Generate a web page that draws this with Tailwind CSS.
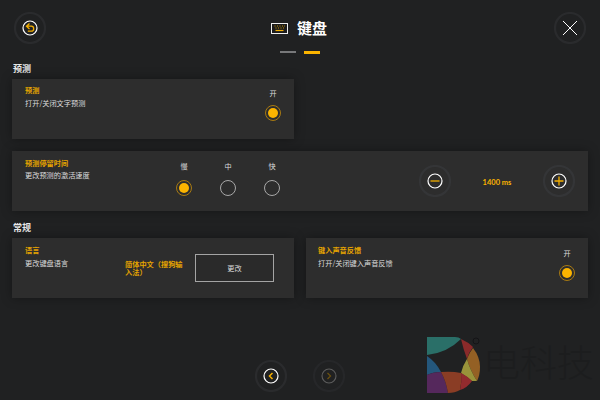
<!DOCTYPE html>
<html lang="zh-CN">
<head>
  <meta charset="UTF-8" />
  <title>键盘</title>
  <script src="https://cdn.jsdelivr.net/npm/@tailwindcss/browser@4"></script>
</head>
<body class="bg-[#202122]">
  <div class="relative w-[600px] h-[400px] overflow-hidden bg-[#202122] text-[#dcdcdc] text-[7.2px] leading-[10px] font-['Noto_Sans_CJK_SC',sans-serif] flex flex-col">

    <!-- Header -->
    <header class="h-[63px] shrink-0 px-[14px] pt-[12px] flex justify-between items-start">
      <svg class="w-[32px] h-[32px]" viewBox="0 0 32 32" fill="none">
        <circle cx="16" cy="16" r="15" stroke="#2a2b2d" stroke-width="2.2" />
        <circle cx="16" cy="16" r="7" stroke="#fff" stroke-width="1.2" />
        <path d="M15.5 11.5l-3 2.7 3 2.7M12.8 14.2h4.4a2.5 2.5 0 0 1 0 5h-3.4" stroke="#f5b000" stroke-width="1.3" />
      </svg>
      <div class="flex flex-col items-center">
        <div class="h-[32px] flex items-center gap-[9px] -ml-[2px]">
          <svg class="w-[17px] h-[11px]" viewBox="0 0 17 11" fill="none">
            <rect x="0.5" y="0.5" width="16" height="10" fill="#1b1b1b" stroke="#eee" />
            <path d="M3.5 3h1M6 3h1M8.5 3h1M11 3h1M13 3h.8M4.5 5h1M7 5h1M9.5 5h1M12 5h1" stroke="#c99400" />
            <path d="M4.5 7.5h8" stroke="#f5b000" stroke-width="1.2" />
          </svg>
          <span class="text-[15px] leading-[20px] font-bold text-white">键盘</span>
        </div>
        <div class="flex gap-[8px] mt-[7px]">
          <span class="w-[16px] h-[2px] bg-[#77787a]"></span>
          <span class="w-[16px] h-[3px] bg-[#fbb400]"></span>
        </div>
      </div>
      <svg class="w-[32px] h-[32px]" viewBox="0 0 32 32" fill="none">
        <circle cx="16" cy="16" r="15" stroke="#2a2b2d" stroke-width="2.2" />
        <path d="M9 9l14 14M23 9L9 23" stroke="#fff" stroke-width="1" />
      </svg>
    </header>

    <main class="px-[12px] flex flex-col">
      <h2 class="h-[12px] mb-[4px] pl-[1px] text-[9px] leading-[12px] font-bold text-[#e8e8e8]">预测</h2>

      <div class="flex">
        <section class="w-[282px] h-[60px] bg-[#2d2d2d] shadow-[0_0_10px_rgba(0,0,0,0.35)] pl-[13px] pr-[13px] pt-[6px] flex justify-between">
          <div>
            <h3 class="font-bold text-[#e6a400]">预测</h3>
            <p class="mt-[3px]">打开/关闭文字预测</p>
          </div>
          <div class="flex flex-col items-center pt-[3px]">
            <span>开</span>
            <span class="mt-[7px] w-[16px] h-[16px] rounded-full border border-[#a87a12] flex items-center justify-center"><span class="w-[10px] h-[10px] rounded-full bg-[#fbb400]"></span></span>
          </div>
        </section>
      </div>

      <section class="mt-[12px] h-[60px] bg-[#2d2d2d] shadow-[0_0_10px_rgba(0,0,0,0.35)] pl-[13px] pr-[13px] flex">
        <div class="w-[137px] pt-[7px]">
          <h3 class="font-bold text-[#e6a400]">预测停留时间</h3>
          <p class="mt-[2px]">更改预测的激活速度</p>
        </div>
        <div class="flex pt-[10px]">
          <div class="w-[44px] flex flex-col items-center">
            <span>慢</span>
            <span class="mt-[9px] w-[16px] h-[16px] rounded-full border border-[#a87a12] flex items-center justify-center"><span class="w-[10px] h-[10px] rounded-full bg-[#fbb400]"></span></span>
          </div>
          <div class="w-[44px] flex flex-col items-center">
            <span>中</span>
            <span class="mt-[9px] w-[16px] h-[16px] rounded-full border border-[#a8a8a8]"></span>
          </div>
          <div class="w-[44px] flex flex-col items-center">
            <span>快</span>
            <span class="mt-[9px] w-[16px] h-[16px] rounded-full border border-[#a8a8a8]"></span>
          </div>
        </div>
        <div class="ml-auto flex items-start pt-[14px]">
          <svg class="w-[32px] h-[32px]" viewBox="0 0 32 32" fill="none">
            <circle cx="16" cy="16" r="15" stroke="#343537" stroke-width="2.2" />
            <circle cx="16" cy="16" r="7" stroke="#fff" stroke-width="1.2" />
            <path d="M11.5 16h9" stroke="#f5b000" stroke-width="1.3" />
          </svg>
          <span class="w-[92px] mt-[13px] text-center text-[7.5px] font-['Lato',sans-serif] font-bold text-[#fbb400]">1400 ms</span>
          <svg class="w-[32px] h-[32px]" viewBox="0 0 32 32" fill="none">
            <circle cx="16" cy="16" r="15" stroke="#343537" stroke-width="2.2" />
            <circle cx="16" cy="16" r="7" stroke="#fff" stroke-width="1.2" />
            <path d="M11.5 16h9M16 11.5v9" stroke="#f5b000" stroke-width="1.3" />
          </svg>
        </div>
      </section>

      <h2 class="mt-[11px] h-[12px] mb-[4px] pl-[1px] text-[9px] leading-[12px] font-bold text-[#e8e8e8]">常规</h2>

      <div class="flex gap-[12px]">
        <section class="w-[282px] h-[60px] bg-[#2d2d2d] shadow-[0_0_10px_rgba(0,0,0,0.35)] pl-[13px] pr-[20px] pt-[7px] flex">
          <div class="w-[100px]">
            <h3 class="font-bold text-[#e6a400]">语言</h3>
            <p class="mt-[3px]">更改键盘语言</p>
          </div>
          <p class="w-[60px] mt-[15px] leading-[8px] font-bold text-[#e6a400]">简体中文（搜狗输入法）</p>
          <button class="ml-[10px] mt-[9px] w-[79px] h-[28px] border border-[#a4a4a4] bg-[#2a2a2a] text-[#dcdcdc] text-[7.2px]">更改</button>
        </section>
        <section class="w-[282px] h-[60px] bg-[#2d2d2d] shadow-[0_0_10px_rgba(0,0,0,0.35)] pl-[12px] pr-[13px] pt-[7px] flex justify-between">
          <div>
            <h3 class="font-bold text-[#e6a400]">键入声音反馈</h3>
            <p class="mt-[3px]">打开/关闭键入声音反馈</p>
          </div>
          <div class="flex flex-col items-center pt-[3px]">
            <span>开</span>
            <span class="mt-[7px] w-[16px] h-[16px] rounded-full border border-[#a87a12] flex items-center justify-center"><span class="w-[10px] h-[10px] rounded-full bg-[#fbb400]"></span></span>
          </div>
        </section>
      </div>
    </main>

    <!-- Bottom nav -->
    <footer class="mt-auto pb-[8px] flex justify-center gap-[26px]">
      <svg class="w-[32px] h-[32px]" viewBox="0 0 32 32" fill="none">
        <circle cx="16" cy="16" r="15" stroke="#2a2b2d" stroke-width="2.2" />
        <circle cx="16" cy="16" r="7" stroke="#fff" stroke-width="1.2" />
        <path d="M17.5 13l-3 3 3 3" stroke="#f5b000" stroke-width="1.5" />
      </svg>
      <svg class="w-[32px] h-[32px]" viewBox="0 0 32 32" fill="none">
        <circle cx="16" cy="16" r="15" stroke="#262729" stroke-width="2.2" />
        <circle cx="16" cy="16" r="7" stroke="#5c5c5c" stroke-width="1.1" />
        <path d="M14.5 13l3 3-3 3" stroke="#6a5010" stroke-width="1.3" />
      </svg>
    </footer>

    <!-- Watermark over the page -->
    <svg class="absolute left-[427px] top-[336px] w-[56px] h-[60px]" viewBox="427 336 56 60" fill="none">
      <path d="M427 337H455Q459 337 461 339Q447 353 427 355Z" fill="#2a6f68" />
      <path d="M461 339Q468 342 473 347Q469 352 467 359Q463 348 461 339Z" fill="#8a2a2a" />
      <path d="M473 348Q480 357 480 367Q480 375 477 381Q470 370 467 359Q469 353 473 348Z" fill="#946024" />
      <path d="M467 359Q470 370 477 381L472 381Q466 376 461 373Q463 365 467 359Z" fill="#99933a" />
      <path d="M427 356Q436 362 441 372Q433 372 427 375Z" fill="#24577c" />
      <path d="M427 375Q433 372 441 372Q446 381 448 393H427Z" fill="#55285c" />
      <path d="M441 372Q452 371 461 373Q462 382 460 390Q455 393 448 393Q446 381 441 372Z" fill="#8a3d25" />
      <path d="M461 373Q467 376 472 381Q467 388 460 390Q462 382 461 373Z" fill="#922b2e" />
      <circle cx="476" cy="341" r="3" stroke="#111214" stroke-width="0.8" />
    </svg>
    <span class="absolute left-[483px] top-[335px] text-[37px] leading-[52px] font-light text-[#1c1d1e] whitespace-nowrap">电科技</span>
  </div>
</body>
</html>
